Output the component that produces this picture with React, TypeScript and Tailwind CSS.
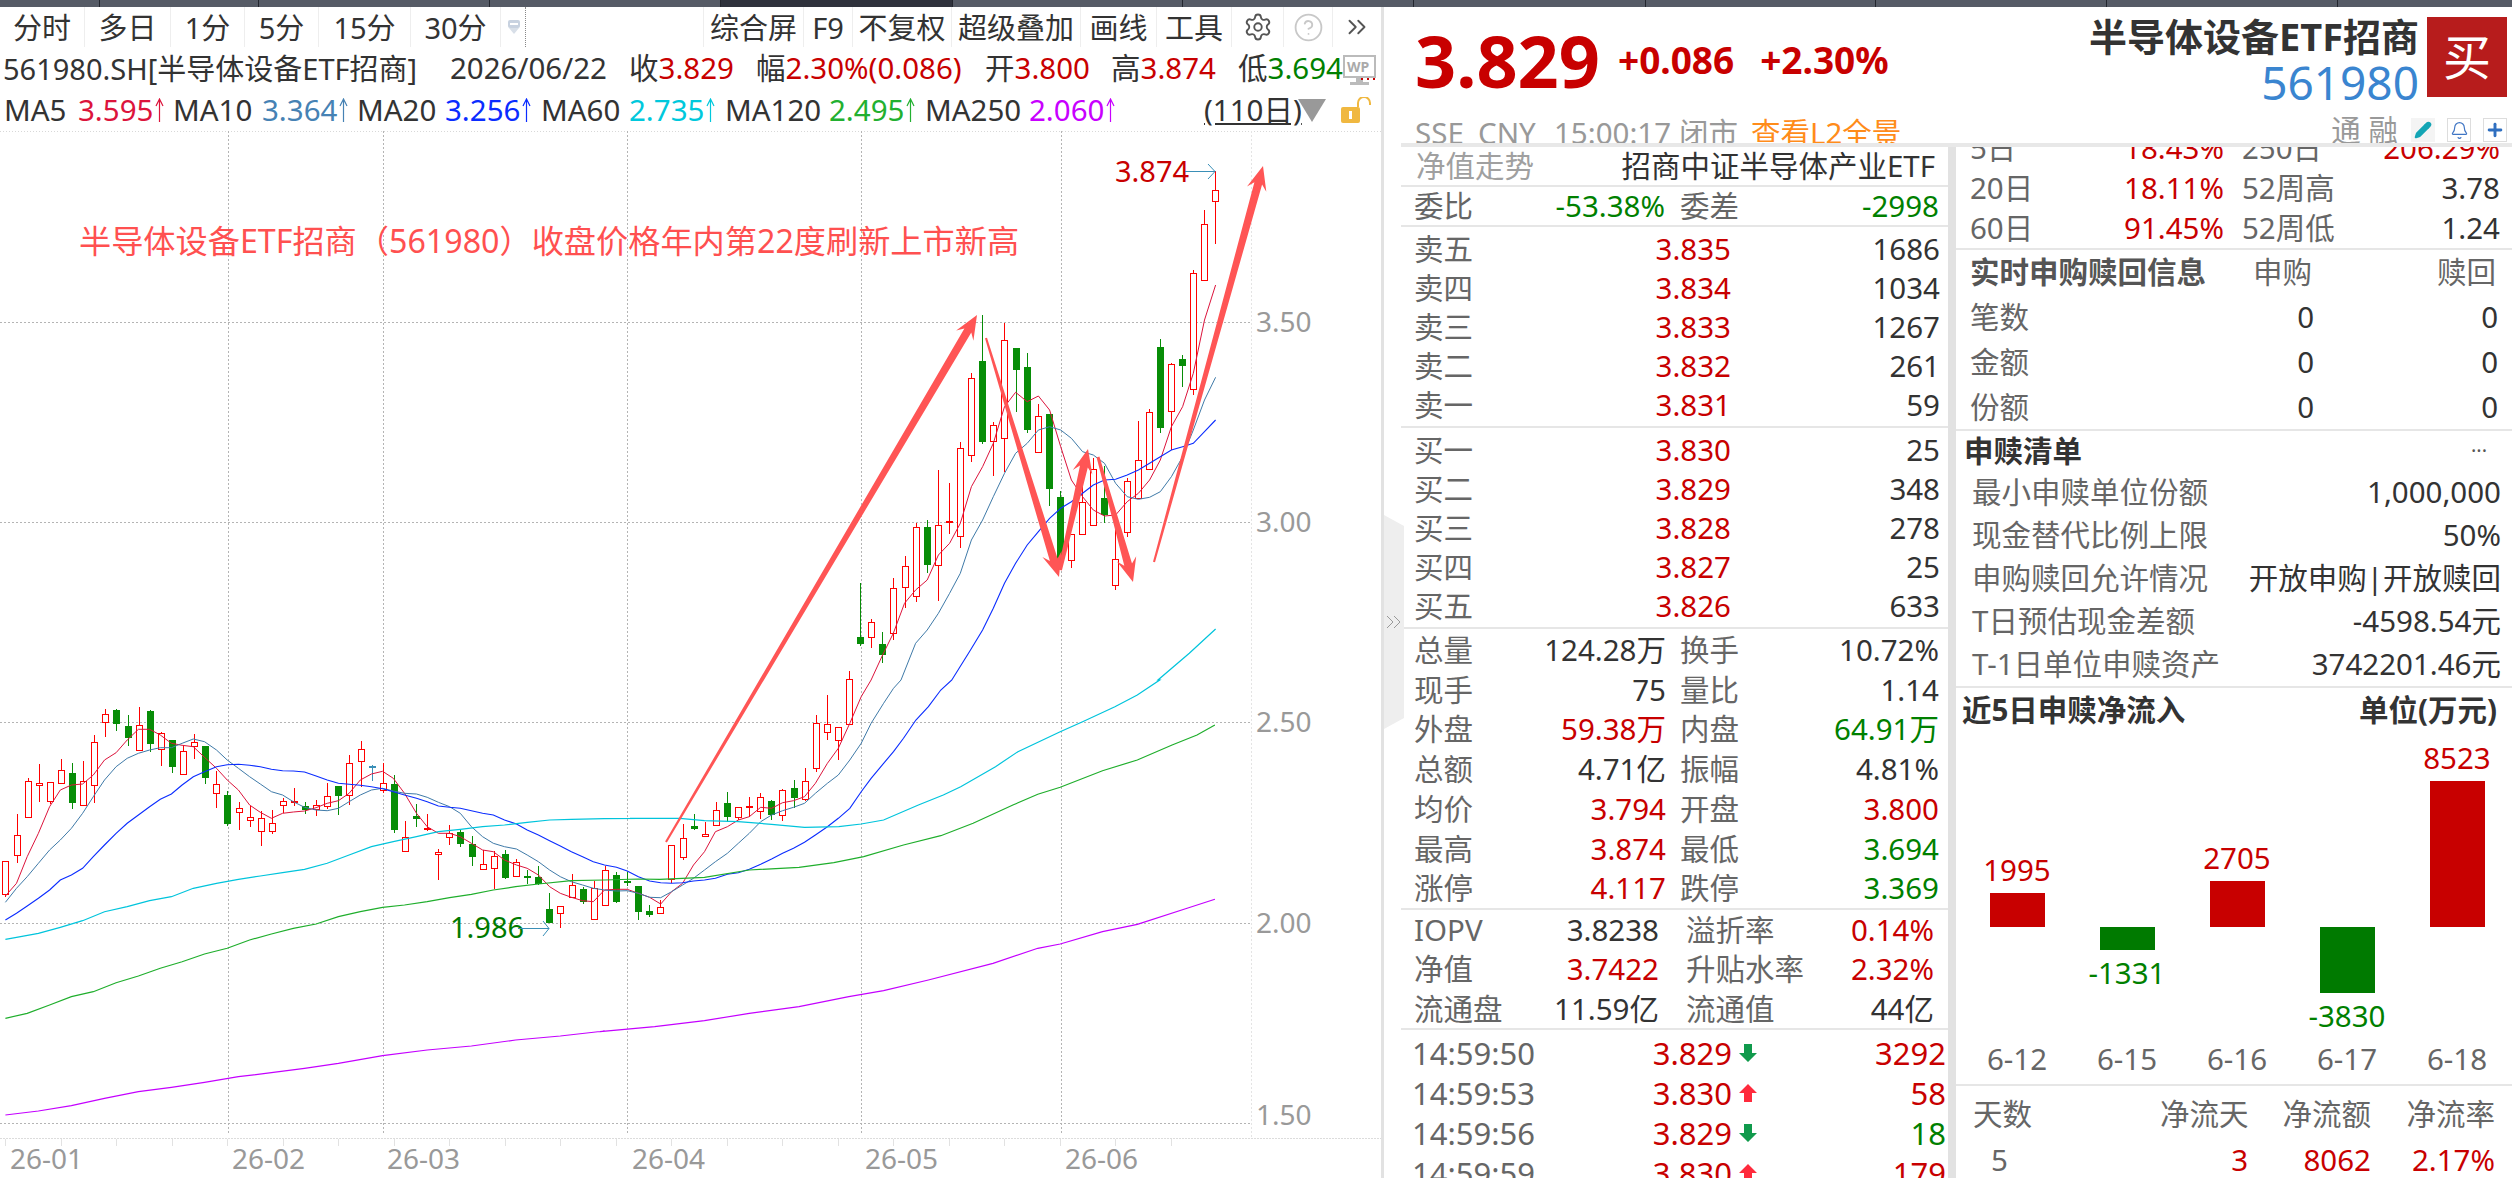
import React from "react";
import { Settings, CircleHelp, ChevronsRight, Pencil, Bell, Plus } from "lucide-react";

// candle: [wickTop, bodyTop, bodyBottom, wickBottom, colour], y values in chart pixels
type Candle = [number, number, number, number, "r" | "g" | "b"];

const low = (v: number) => 680 + v / 3;
const high = (v: number) => 280 + v / 3;

const rawLow: [number, number, number, number, "r" | "g" | "b"][] = [
  [543, 543, 643, 652, "r"], [402, 466, 526, 548, "r"], [295, 304, 412, 412, "r"], [252, 310, 317, 365, "r"], [307, 307, 365, 372, "r"],
  [237, 271, 310, 310, "r"], [250, 280, 368, 386, "g"], [243, 304, 376, 376, "r"], [165, 187, 316, 368, "r"], [87, 103, 127, 170, "r"],
  [88, 90, 131, 152, "g"], [105, 138, 173, 197, "g"], [82, 136, 212, 212, "r"], [90, 93, 191, 215, "g"], [157, 160, 208, 257, "r"],
  [180, 181, 260, 278, "g"], [195, 214, 283, 283, "r"], [162, 187, 200, 236, "r"], [198, 198, 293, 311, "g"], [272, 313, 340, 383, "r"],
  [333, 345, 431, 437, "g"], [367, 385, 398, 449, "r"], [378, 412, 422, 440, "r"], [392, 415, 455, 497, "r"], [390, 430, 455, 462, "r"],
  [355, 364, 376, 400, "r"], [324, 362, 364, 378, "r"], [366, 378, 389, 402, "g"], [360, 374, 386, 407, "r"], [309, 349, 380, 388, "r"],
  [318, 318, 347, 404, "g"], [225, 250, 347, 375, "r"], [183, 208, 244, 320, "r"], [255, 258, 260, 302, "b"], [250, 310, 332, 338, "r"],
  [285, 312, 450, 458, "g"], [423, 472, 514, 514, "r"], [373, 408, 416, 440, "g"], [402, 445, 447, 452, "r"], [507, 516, 521, 600, "r"],
  [435, 458, 471, 495, "r"], [450, 456, 491, 500, "g"], [468, 492, 530, 558, "g"], [510, 553, 568, 568, "r"], [513, 529, 566, 628, "r"],
  [510, 522, 594, 597, "g"], [537, 545, 586, 590, "r"], [570, 589, 592, 612, "g"], [558, 591, 613, 615, "g"], [640, 687, 728, 728, "g"],
  [677, 679, 700, 743, "r"], [582, 616, 652, 652, "r"], [620, 627, 665, 672, "g"], [603, 624, 718, 718, "r"], [557, 571, 676, 676, "r"],
  [577, 585, 665, 668, "g"], [577, 604, 607, 618, "g"], [618, 618, 695, 720, "g"], [675, 694, 705, 712, "g"], [660, 682, 700, 700, "r"],
  [495, 495, 597, 610, "r"], [432, 475, 533, 540, "r"], [403, 438, 446, 450, "g"], [425, 463, 470, 472, "r"], [367, 391, 437, 437, "r"],
  [337, 369, 410, 425, "g"], [380, 380, 410, 420, "r"], [352, 379, 383, 410, "r"], [340, 352, 395, 417, "r"], [360, 364, 405, 420, "g"],
  [328, 331, 407, 422, "r"], [300, 325, 353, 385, "g"], [265, 304, 358, 362, "r"], [105, 130, 266, 275, "r"], [45, 133, 157, 180, "r"],
  [142, 142, 181, 240, "r"],
];

const rawHigh: [number, number, number, number, "r" | "g" | "b"][] = [
  [1173, 1197, 1332, 1335, "r"], [910, 1072, 1092, 1098, "g"], [1018, 1027, 1073, 1103, "r"], [1057, 1093, 1125, 1150, "g"], [895, 925, 1060, 1080, "r"],
  [828, 859, 922, 983, "r"], [730, 742, 950, 965, "r"], [720, 741, 855, 880, "g"], [570, 736, 856, 962, "r"], [608, 723, 725, 762, "r"],
  [487, 505, 770, 803, "r"], [280, 295, 526, 545, "r"], [105, 243, 486, 492, "g"], [427, 436, 485, 587, "r"], [128, 181, 476, 575, "r"],
  [205, 205, 269, 395, "g"], [220, 261, 450, 458, "g"], [372, 409, 518, 518, "r"], [402, 402, 627, 678, "g"], [633, 651, 842, 842, "g"],
  [763, 763, 842, 865, "r"], [610, 666, 761, 761, "r"], [535, 568, 737, 737, "r"], [558, 654, 706, 730, "g"], [745, 838, 916, 930, "r"],
  [595, 604, 758, 770, "r"], [423, 541, 654, 654, "r"], [388, 397, 568, 568, "r"], [178, 201, 443, 458, "g"], [250, 253, 394, 510, "r"],
  [225, 237, 257, 320, "g"],
];

const candles: Candle[] = [
  ...rawLow.map((c): Candle => [low(c[0]), low(c[1]), low(c[2]), low(c[3]), c[4]]),
  ...rawHigh.map((c): Candle => [high(c[0]), high(c[1]), high(c[2]), high(c[3]), c[4]]),
  [270, 273, 389, 395, "r"],
  [210, 224, 280, 281, "r"],
  [171, 190, 201, 244, "r"],
];

const candleX = (i: number) => Math.round(5.4 + 11.1 * i);

// line points were read off three crops, each with its own offset
const fromA = (p: number[]) => pairs(p, (x) => x / 2.24, low);
const fromB = (p: number[]) => pairs(p, (x) => 600 + x / 2.01, low);
const fromC = (p: number[]) => pairs(p, (x) => 600 + x / 2.24, high);

function pairs(p: number[], fx: (n: number) => number, fy: (n: number) => number): string {
  const out: string[] = [];
  for (let i = 0; i < p.length; i += 2) out.push(fx(p[i]).toFixed(1) + "," + fy(p[i + 1]).toFixed(1));
  return out.join(" ");
}

const maLines = [
  {
    color: "#dc143c",
    width: 1,
    points: [
      fromA([12,648,37,610,61,530,86,460,111,380,135,330,160,315,185,312,209,285,234,240,260,218,285,180,310,148,335,148,359,165,384,190,408,196,433,200,458,232,485,265,509,300,534,330,559,375,583,397,608,415,633,400,657,396,682,393,708,383,733,370,758,362,782,340,807,300,832,282,857,274,881,295,906,340,933,400,957,440,982,460,1007,460,1031,470,1056,490,1081,510,1105,515,1130,540,1157,555,1181,565,1206,585,1231,620,1255,640,1280,652,1305,662,1329,665,1354,630,1381,628,1405,628,1430,640,1455,652,1480,672]),
      fromB([144,635,166,610,188,555,210,515,232,455,256,440,278,420,300,410,323,382,345,385,367,368,389,362,411,350,433,310,457,250,479,205,502,130,525,50,545,0]),
      fromC([633,1125,657,1060,682,970,707,930,733,900,758,825,783,790,807,730,832,620,857,560,881,490,906,380,931,337,957,365,982,348,1007,390,1032,500,1056,600,1081,650,1105,690,1130,708,1155,705,1181,665,1206,640,1231,600,1255,540,1280,440,1305,380,1329,280,1354,120,1379,15]),
    ],
  },
  {
    color: "#3f7aa8",
    width: 1,
    points: [
      fromA([12,667,37,625,61,590,86,550,111,510,135,480,160,445,185,400,209,350,234,300,260,260,285,235,310,220,335,210,359,203,384,203,408,190,433,177,458,185,485,210,509,240,534,265,559,290,583,312,608,335,633,345,657,365,682,382,708,390,733,392,758,385,782,365,807,345,832,330,857,325,881,333,906,340,933,342,957,352,982,367,1007,380,1031,400,1056,440,1081,470,1105,490,1130,500,1157,507,1181,525,1206,545,1231,570,1255,590,1280,605,1305,615,1329,625,1354,630,1381,633,1405,632,1430,640,1455,652,1480,653]),
      fromB([144,635,166,615,188,595,210,570,232,545,256,520,278,490,300,460,323,425,345,405,367,392,389,382,411,370,433,340,457,310,479,285,502,240,525,190,545,130,570,70,590,25,605,0]),
      fromC([707,1090,733,1050,758,1000,783,940,807,880,832,780,857,720,881,650,906,580,931,520,957,490,982,450,1007,440,1032,450,1056,475,1081,515,1105,525,1130,550,1155,610,1181,650,1206,658,1231,652,1255,635,1280,590,1305,530,1329,450,1354,360,1379,292]),
    ],
  },
  {
    color: "#0a2cff",
    width: 1.1,
    points: [
      fromA([12,720,37,700,61,678,86,655,111,630,135,600,160,585,185,565,209,530,234,495,260,460,285,430,310,405,335,380,359,358,384,342,408,315,433,290,458,275,485,260,509,254,534,253,559,256,583,260,608,268,633,272,657,273,682,276,708,288,733,300,758,310,782,313,807,316,832,320,857,326,881,335,906,345,933,355,957,365,982,378,1007,382,1031,385,1056,392,1081,400,1105,405,1130,420,1157,432,1181,450,1206,465,1231,482,1255,498,1280,515,1305,530,1329,545,1354,555,1381,562,1405,573,1430,590,1455,603,1480,608]),
      fromB([144,610,166,608,188,603,210,600,232,595,256,583,278,578,300,568,323,553,345,537,367,520,389,505,411,487,433,465,457,440,479,415,502,385,525,335,545,295,570,250,590,215,610,175,635,120,660,80,685,30,707,0]),
      fromC([788,1200,830,1110,857,1050,881,985,906,910,931,850,957,795,982,755,1007,715,1032,685,1056,665,1081,640,1105,615,1130,600,1155,598,1181,585,1206,570,1231,550,1255,530,1280,510,1305,500,1329,490,1354,455,1379,420]),
    ],
  },
  {
    color: "#00c4dc",
    width: 1.2,
    points: [
      fromA([12,778,37,772,86,760,135,742,185,722,234,695,285,680,335,662,384,650,433,625,485,610,534,598,583,588,633,578,682,568,733,550,782,525,832,500,881,485,933,470,982,455,1031,448,1081,440,1130,435,1181,427,1231,420,1280,418,1354,416,1430,415]),
      fromB([60,415,160,415,210,422,278,425,345,433,411,442,480,440,525,432,570,420,640,375,690,345,725,320,795,260,840,215,925,155,970,125,1035,80,1080,45,1125,0]),
      fromC([1250,1200,1320,1120,1379,1047]),
    ],
  },
  {
    color: "#1fae2c",
    width: 1.2,
    points: [
      fromA([12,1015,61,1000,111,975,160,950,209,935,260,908,310,888,359,865,408,845,458,822,509,805,559,780,608,762,657,745,708,732,758,710,807,695,857,682,906,675,957,665,1007,653,1056,643,1105,630,1155,620,1206,612,1280,602,1354,600,1430,597]),
      fromB([120,598,210,592,300,570,400,562,470,548,530,530,610,495,685,467,750,430,830,375,880,343,925,322,1010,272,1080,240,1150,195,1200,165,1236,135]),
    ],
  },
  {
    color: "#c400ff",
    width: 1.2,
    points: [
      fromA([12,1305,86,1293,160,1277,234,1255,310,1235,384,1222,458,1207,534,1190,608,1178,682,1165,758,1150,857,1127,957,1110,1056,1098,1155,1080,1255,1068,1354,1053]),
      fromB([0,1055,110,1040,210,1022,300,1000,400,980,500,950,570,932,660,900,790,850,880,805,925,792,1010,755,1080,733,1180,685,1236,658]),
    ],
  },
];

// tapered drawn-on arrow, thin at the tail and wide near the head
function arrowPoints(x1: number, y1: number, x2: number, y2: number, w1: number, w2: number, headLen: number, headW: number): string {
  const len = Math.hypot(x2 - x1, y2 - y1);
  const ux = (x2 - x1) / len;
  const uy = (y2 - y1) / len;
  const nx = -uy;
  const ny = ux;
  const bx = x2 - ux * headLen * 0.75;
  const by = y2 - uy * headLen * 0.75;
  const hx = x2 - ux * headLen;
  const hy = y2 - uy * headLen;
  const p = [
    [x1 + (nx * w1) / 2, y1 + (ny * w1) / 2],
    [bx + (nx * w2) / 2, by + (ny * w2) / 2],
    [hx + (nx * headW) / 2, hy + (ny * headW) / 2],
    [x2, y2],
    [hx - (nx * headW) / 2, hy - (ny * headW) / 2],
    [bx - (nx * w2) / 2, by - (ny * w2) / 2],
    [x1 - (nx * w1) / 2, y1 - (ny * w1) / 2],
  ];
  return p.map((q) => q[0].toFixed(1) + "," + q[1].toFixed(1)).join(" ");
}

const drawnArrows = [
  arrowPoints(666, 842, 977, 315, 2, 8, 24, 20),
  arrowPoints(986, 338, 1059, 577, 2, 8, 24, 20),
  arrowPoints(1060, 570, 1088, 449, 4, 8, 24, 20),
  arrowPoints(1098, 457, 1133, 582, 3, 8, 24, 20),
  arrowPoints(1154, 562, 1263, 166, 2, 8, 24, 20),
];

const priceGrid = [
  { y: 322, label: "3.50", textY: 322 },
  { y: 522, label: "3.00", textY: 522 },
  { y: 722, label: "2.50", textY: 722 },
  { y: 923, label: "2.00", textY: 923 },
  { y: 1123, label: "1.50", textY: 1115 },
];
const monthLines = [228, 383, 627, 861, 1061];
const monthLabels = [
  { x: 10, t: "26-01" },
  { x: 232, t: "26-02" },
  { x: 387, t: "26-03" },
  { x: 632, t: "26-04" },
  { x: 865, t: "26-05" },
  { x: 1065, t: "26-06" },
];

function KChart() {
  return (
    <svg viewBox="0 131 1381 1047" className="block w-[1381px] h-[1047px]">
      <line x1="0" y1="131.5" x2="1381" y2="131.5" stroke="#d8d8d8" strokeDasharray="1 2" />
      {priceGrid.map((g) => (
        <line key={g.y} x1="0" y1={g.y + 0.5} x2="1252" y2={g.y + 0.5} stroke="#b4b4b4" strokeDasharray="2 2" />
      ))}
      {monthLines.map((x) => (
        <line key={x} x1={x + 0.5} y1="131" x2={x + 0.5} y2="1134" stroke="#b4b4b4" strokeDasharray="2 2" />
      ))}
      <line x1="1251.5" y1="131" x2="1251.5" y2="1138" stroke="#e4e4e4" strokeDasharray="2 2" />
      <line x1="0" y1="1138.5" x2="1381" y2="1138.5" stroke="#dcdcdc" strokeDasharray="2 1" />
      {candles.map((_, i) =>
        i % 5 === 0 ? <line key={i} x1={candleX(i) + 0.5} y1="1139" x2={candleX(i) + 0.5} y2="1146" stroke="#e2e2e2" /> : null
      )}

      <g shapeRendering="crispEdges">
        {candles.map((c, i) => {
          const x = candleX(i);
          const col = c[4] === "r" ? "#ff0000" : c[4] === "g" ? "#078d07" : "#3a8fb7";
          return (
            <g key={i}>
              <line x1={x + 0.5} y1={c[0]} x2={x + 0.5} y2={c[3]} stroke={col} />
              {c[4] === "r" ? (
                <rect x={x - 2.5} y={Math.round(c[1]) + 0.5} width="6" height={Math.max(1, Math.round(c[2] - c[1]))} fill="#fff" stroke={col} />
              ) : (
                <rect x={x - 3} y={c[1]} width="7" height={Math.max(2, c[2] - c[1])} fill={col} />
              )}
            </g>
          );
        })}
      </g>

      {maLines.map((m) => (
        <polyline key={m.color} points={m.points.join(" ")} fill="none" stroke={m.color} strokeWidth={m.width} />
      ))}

      {drawnArrows.map((p, i) => (
        <polygon key={i} points={p} fill="#ff5555" />
      ))}

      <text x="79" y="253" fontSize="32.2" fill="#ff5050">半导体设备ETF招商（561980）收盘价格年内第22度刷新上市新高</text>

      <text x="1115" y="182" fontSize="29" fill="#c80000">3.874</text>
      <path d="M1185 171.5H1215M1208 164l7 7.5-7 7.5" fill="none" stroke="#3a8fb7" />
      <text x="450" y="938" fontSize="29" fill="#007a00">1.986</text>
      <path d="M518 928.5H549M543 921l6 7.5-6 7.5" fill="none" stroke="#3a8fb7" />

      {priceGrid.map((g) => (
        <text key={g.label} x="1256" y={g.textY + 10} fontSize="28" fill="#999">{g.label}</text>
      ))}
      {monthLabels.map((m) => (
        <text key={m.t} x={m.x} y="1169" fontSize="28" fill="#999">{m.t}</text>
      ))}
    </svg>
  );
}

const leftTabs = [
  { t: "分时", w: "w-[85px]" },
  { t: "多日", w: "w-[86px]" },
  { t: "1分", w: "w-[74px]" },
  { t: "5分", w: "w-[74px]" },
  { t: "15分", w: "w-[92px]" },
  { t: "30分", w: "w-[90px]" },
];
const rightTabs = [
  { t: "综合屏", w: "w-[100px]" },
  { t: "F9", w: "w-[49px]" },
  { t: "不复权", w: "w-[99px]" },
  { t: "超级叠加", w: "w-[129px]" },
  { t: "画线", w: "w-[76px]" },
  { t: "工具", w: "w-[75px]" },
];

function Toolbar() {
  return (
    <div className="flex h-[40px] items-center text-[29px] text-[#333] whitespace-nowrap">
      {leftTabs.map((t) => (
        <div key={t.t} className={`${t.w} h-full flex items-center justify-center border-r border-[#eeeeee]`}>{t.t}</div>
      ))}
      <div className="w-[25px] h-full flex items-center justify-end pr-[5px] border-r border-dotted border-[#888]">
        <svg width="12" height="14" viewBox="0 0 12 14">
          <rect x="0" y="0" width="12" height="8" rx="2" fill="#c8d2e0" />
          <rect x="2" y="3" width="8" height="2" fill="#fff" />
          <path d="M1 8h10l-5 6z" fill="#d8dfe8" />
        </svg>
      </div>
      <div className="w-[178px] h-full border-r border-[#eeeeee]" />
      {rightTabs.map((t) => (
        <div key={t.t} className={`${t.w} h-full flex items-center justify-center border-r border-[#eeeeee]`}>{t.t}</div>
      ))}
      <div className="w-[52px] h-full flex items-center justify-center border-r border-[#eeeeee]">
        <Settings size={30} strokeWidth={1.5} color="#555" />
      </div>
      <div className="w-[49px] h-full flex items-center justify-center border-r border-[#eeeeee]">
        <CircleHelp size={31} strokeWidth={1.4} color="#c8c8c8" />
      </div>
      <div className="flex-1 h-full flex items-center justify-center">
        <ChevronsRight size={30} strokeWidth={1.5} color="#555" />
      </div>
    </div>
  );
}

function QuoteRow() {
  return (
    <div className="relative flex h-[42px] items-center pl-[3px] text-[#333] whitespace-nowrap">
      <div className="w-[447px] text-[29px]">561980.SH[半导体设备ETF招商]</div>
      <div className="w-[179px]">2026/06/22</div>
      <div className="w-[127px]">收<span className="text-[#c80000]">3.829</span></div>
      <div className="w-[229px]">幅<span className="text-[#c80000]">2.30%(0.086)</span></div>
      <div className="w-[126px]">开<span className="text-[#c80000]">3.800</span></div>
      <div className="w-[127px]">高<span className="text-[#c80000]">3.874</span></div>
      <div className="w-[105px]">低<span className="text-[#008000]">3.694</span></div>
      <svg width="34" height="32" viewBox="0 0 34 32" className="absolute left-[1343px] top-[8px]">
        <rect x="1" y="1" width="31" height="21" fill="#fff" stroke="#bbb" strokeWidth="2" />
        <rect x="13" y="22" width="7" height="5" fill="#bbb" />
        <rect x="7" y="27" width="19" height="3" fill="#bbb" />
        <text x="4" y="17" fontSize="14" fontWeight="700" fill="#aaa">WP</text>
        <path d="M18 24h2M24 24h2M30 24h2" stroke="#c80000" strokeWidth="2" />
      </svg>
    </div>
  );
}

const maLegend = [
  { n: "MA5", v: "3.595", c: "text-[#dc143c]", w: "w-[169px]", nw: "w-[74px]" },
  { n: "MA10", v: "3.364", c: "text-[#4682b4]", w: "w-[184px]", nw: "w-[89px]" },
  { n: "MA20", v: "3.256", c: "text-[#0a2cff]", w: "w-[184px]", nw: "w-[88px]" },
  { n: "MA60", v: "2.735", c: "text-[#00c8dc]", w: "w-[184px]", nw: "w-[88px]" },
  { n: "MA120", v: "2.495", c: "text-[#22b030]", w: "w-[200px]", nw: "w-[104px]" },
  { n: "MA250", v: "2.060", c: "text-[#c800ff]", w: "w-[279px]", nw: "w-[104px]" },
];

function UpMark() {
  return (
    <svg width="9" height="24" viewBox="0 0 9 24" className="ml-[2px]">
      <path d="M4.5 24V1M1 8l3.5-7 3.5 7" fill="none" stroke="currentColor" strokeWidth="1.2" />
    </svg>
  );
}

function MaRow() {
  return (
    <div className="flex h-[42px] items-center pl-[4px] text-[#333] whitespace-nowrap">
      {maLegend.map((m) => (
        <div key={m.n} className={`${m.w} flex items-center`}>
          <span className={`${m.nw} shrink-0`}>{m.n}</span>
          <span className={`${m.c} flex items-center`}>{m.v}<UpMark /></span>
        </div>
      ))}
      <div className="w-[94px] underline">(110日)</div>
      <div className="w-0 h-0 border-l-[14px] border-r-[14px] border-t-[23px] border-l-transparent border-r-transparent border-t-[#999]" />
      <svg width="32" height="27" viewBox="0 0 32 27" className="ml-[15px]">
        <rect x="0" y="10" width="19" height="16" rx="2" fill="#f0b840" />
        <rect x="8" y="14" width="3" height="8" fill="#fff" />
        <path d="M17 10V6a6 6 0 0 1 12 0v2" fill="none" stroke="#f0b840" strokeWidth="2" />
      </svg>
    </div>
  );
}

const asks = [
  ["卖五", "3.835", "1686"],
  ["卖四", "3.834", "1034"],
  ["卖三", "3.833", "1267"],
  ["卖二", "3.832", "261"],
  ["卖一", "3.831", "59"],
];
const bids = [
  ["买一", "3.830", "25"],
  ["买二", "3.829", "348"],
  ["买三", "3.828", "278"],
  ["买四", "3.827", "25"],
  ["买五", "3.826", "633"],
];

const R = "text-[#c80000]";
const G = "text-[#008000]";
const D = "text-[#333]";

const statsA = [
  ["总量", "124.28万", D, "换手", "10.72%", D],
  ["现手", "75", D, "量比", "1.14", D],
  ["外盘", "59.38万", R, "内盘", "64.91万", G],
  ["总额", "4.71亿", D, "振幅", "4.81%", D],
  ["均价", "3.794", R, "开盘", "3.800", R],
  ["最高", "3.874", R, "最低", "3.694", G],
  ["涨停", "4.117", R, "跌停", "3.369", G],
];
const statsB = [
  ["IOPV", "3.8238", D, "溢折率", "0.14%", R],
  ["净值", "3.7422", R, "升贴水率", "2.32%", R],
  ["流通盘", "11.59亿", D, "流通值", "44亿", D],
];
const ticks = [
  ["14:59:50", "3.829", false, "3292", R],
  ["14:59:53", "3.830", true, "58", R],
  ["14:59:56", "3.829", false, "18", G],
  ["14:59:59", "3.830", true, "179", R],
] as const;

function BookRows({ rows }: { rows: string[][] }) {
  return (
    <div className="py-[2px]">
      {rows.map((r) => (
        <div key={r[0]} className="h-[39px] pl-[13px] grid grid-cols-[100px_217px_209px] items-center">
          <div className="text-[#666]">{r[0]}</div>
          <div className="text-right text-[#c80000]">{r[1]}</div>
          <div className="text-right text-[#333]">{r[2]}</div>
        </div>
      ))}
    </div>
  );
}

function TickArrow({ up }: { up: boolean }) {
  return (
    <svg width="18" height="18" viewBox="0 0 18 18">
      {up ? <path d="M9 0l9 9h-5v9H5V9H0z" fill="#ff2a3c" /> : <path d="M9 18L0 9h5V0h8v9h5z" fill="#109a4c" />}
    </svg>
  );
}

function MarketColumn() {
  return (
    <div className="w-[547px] overflow-hidden">
      <div className="h-[40px] flex items-center justify-between pl-[15px] pr-[13px] border-b-2 border-[#e6e6e6]">
        <div className="text-[#a0a0a0]">净值走势</div>
        <div className="text-[#333]">招商中证半导体产业ETF</div>
      </div>
      <div className="h-[40px] pl-[13px] grid grid-cols-[100px_151px_115px_159px] items-center border-b-2 border-[#e6e6e6]">
        <div className="text-[#666]">委比</div>
        <div className={`text-right ${G}`}>-53.38%</div>
        <div className="pl-[15px] text-[#666]">委差</div>
        <div className={`text-right ${G}`}>-2998</div>
      </div>
      <div className="border-b-2 border-[#e6e6e6]"><BookRows rows={asks} /></div>
      <div className="border-b-2 border-[#e6e6e6]"><BookRows rows={bids} /></div>
      <div className="border-b-2 border-[#e6e6e6] pt-[1px]">
        {statsA.map((r) => (
          <div key={r[0]} className="h-[39.7px] pl-[13px] grid grid-cols-[100px_152px_114px_159px] items-center">
            <div className="text-[#666]">{r[0]}</div>
            <div className={`text-right ${r[2]}`}>{r[1]}</div>
            <div className="pl-[14px] text-[#666]">{r[3]}</div>
            <div className={`text-right ${r[5]}`}>{r[4]}</div>
          </div>
        ))}
      </div>
      <div className="border-b-2 border-[#e6e6e6]">
        {statsB.map((r) => (
          <div key={r[0]} className="h-[39.5px] pl-[13px] grid grid-cols-[100px_145px_130px_145px] items-center">
            <div className="text-[#666] whitespace-nowrap">{r[0]}</div>
            <div className={`text-right ${r[2]}`}>{r[1]}</div>
            <div className="pl-[27px] text-[#666] whitespace-nowrap">{r[3]}</div>
            <div className={`text-right ${r[5]}`}>{r[4]}</div>
          </div>
        ))}
      </div>
      <div className="pt-[3px] text-[31px]">
        {ticks.map((r) => (
          <div key={r[0]} className="h-[40px] pl-[11px] grid grid-cols-[105px_215px_28px_186px] items-center">
            <div className="text-[#666] whitespace-nowrap">{r[0]}</div>
            <div className="text-right text-[#c80000]">{r[1]}</div>
            <div className="pl-[7px] flex items-center"><TickArrow up={r[2]} /></div>
            <div className={`text-right ${r[4]}`}>{r[3]}</div>
          </div>
        ))}
      </div>
    </div>
  );
}

const returns = [
  ["5日", "18.43%", "250日", "206.29%"],
  ["20日", "18.11%", "52周高", "3.78"],
  ["60日", "91.45%", "52周低", "1.24"],
];
const subscribe = [
  ["笔数", "0", "0"],
  ["金额", "0", "0"],
  ["份额", "0", "0"],
];
const basket = [
  ["最小申赎单位份额", "1,000,000"],
  ["现金替代比例上限", "50%"],
  ["申购赎回允许情况", "开放申购|开放赎回"],
  ["T日预估现金差额", "-4598.54元"],
  ["T-1日单位申赎资产", "3742201.46元"],
];
const flows = [
  { d: "6-12", v: 1995 },
  { d: "6-15", v: -1331 },
  { d: "6-16", v: 2705 },
  { d: "6-17", v: -3830 },
  { d: "6-18", v: 8523 },
];
const flowScale = 146 / 8523;

function FlowChart() {
  return (
    <div className="grid grid-cols-[repeat(5,110px)] ml-[6px]">
      {flows.map((f) => {
        const h = Math.round(Math.abs(f.v) * flowScale);
        return (
          <div key={f.d} className="flex flex-col items-center">
            <div className="h-[195px] flex flex-col justify-end items-center">
              {f.v > 0 && (
                <>
                  <div className={`leading-[30px] mb-[8px] ${R}`}>{f.v}</div>
                  <div className="w-[55px] bg-[#c80000]" style={{ height: h }} />
                </>
              )}
            </div>
            <div className="h-[112px] flex flex-col items-center">
              {f.v < 0 && (
                <>
                  <div className="w-[55px] bg-[#007a00]" style={{ height: h }} />
                  <div className={`leading-[30px] mt-[8px] ${G}`}>{f.v}</div>
                </>
              )}
            </div>
            <div className="h-[45px] pb-[5px] flex items-center text-[#666]">{f.d}</div>
          </div>
        );
      })}
    </div>
  );
}

function EtfColumn() {
  return (
    <div className="flex-1 overflow-hidden">
      <div className="-mt-[19px] border-b-2 border-[#e6e6e6]">
        {returns.map((r) => (
          <div key={r[0]} className="h-[40px] pl-[14px] grid grid-cols-[100px_154px_118px_158px] items-center">
            <div className="text-[#666]">{r[0]}</div>
            <div className={`text-right ${R}`}>{r[1]}</div>
            <div className="pl-[18px] text-[#666] whitespace-nowrap">{r[2]}</div>
            <div className={`text-right ${r[3] === "206.29%" ? R : D}`}>{r[3]}</div>
          </div>
        ))}
      </div>
      <div className="border-b-2 border-[#e6e6e6]">
        <div className="h-[44px] pl-[14px] grid grid-cols-[271px_71px_184px] items-center">
          <div className="font-bold text-[#555] whitespace-nowrap">实时申购赎回信息</div>
          <div className="text-right text-[#666]">申购</div>
          <div className="text-right text-[#666]">赎回</div>
        </div>
        {subscribe.map((r) => (
          <div key={r[0]} className="h-[45px] pl-[14px] grid grid-cols-[100px_244px_184px] items-center">
            <div className="text-[#666]">{r[0]}</div>
            <div className={`text-right ${D}`}>{r[1]}</div>
            <div className={`text-right ${D}`}>{r[2]}</div>
          </div>
        ))}
      </div>
      <div className="border-b-2 border-[#e6e6e6]">
        <div className="h-[39.5px] pl-[8px] pr-[25px] flex items-center justify-between">
          <div className="font-bold text-[#333]">申赎清单</div>
          <div className="text-[#555] text-[20px]">···</div>
        </div>
        {basket.map((r) => (
          <div key={r[0]} className="h-[43px] pl-[16px] pr-[11px] flex items-center justify-between whitespace-nowrap">
            <div className="text-[#666]">{r[0]}</div>
            <div className={D}>{r[1]}</div>
          </div>
        ))}
      </div>
      <div className="h-[44px] pl-[6px] pr-[15px] flex items-center justify-between font-bold text-[#333]">
        <div>近5日申赎净流入</div>
        <div>单位(万元)</div>
      </div>
      <FlowChart />
      <div className="border-t-2 border-[#e6e6e6]">
        <div className="h-[56px] grid grid-cols-[187px_88px_123px_124px] items-center text-[#666] pl-[17px] whitespace-nowrap">
          <div>天数</div>
          <div className="text-right">净流天</div>
          <div className="text-right">净流额</div>
          <div className="text-right">净流率</div>
        </div>
        <div className="h-[36px] grid grid-cols-[187px_88px_123px_124px] items-center pl-[17px]">
          <div className="pl-[18px] text-[#666]">5</div>
          <div className={`text-right ${R}`}>3</div>
          <div className={`text-right ${R}`}>8062</div>
          <div className={`text-right ${R}`}>2.17%</div>
        </div>
      </div>
    </div>
  );
}

function PanelHeader() {
  return (
    <div className="h-[136px] flex justify-between overflow-hidden">
      <div className="pl-[14px]">
        <div className="h-[105px] flex items-center text-[#c80000] font-bold">
          <span className="text-[72px]">3.829</span>
          <span className="text-[37px] ml-[18px]">+0.086</span>
          <span className="text-[37px] ml-[26px]">+2.30%</span>
        </div>
        <div className="h-[31px] overflow-hidden leading-[42px] text-[#999] whitespace-nowrap flex">
          <span className="w-[63px]">SSE</span>
          <span className="w-[76px]">CNY</span>
          <span className="w-[125px]">15:00:17</span>
          <span className="w-[72px]">闭市</span>
          <span className="text-[#ff8c1a]">查看L2全景</span>
        </div>
      </div>
      <div className="pt-[10px] pr-[5px] flex flex-col items-end">
        <div className="flex h-[80px]">
          <div className="flex flex-col items-end mr-[8px]">
            <div className="text-[38px] font-bold leading-[38px] text-[#333] whitespace-nowrap">半导体设备ETF招商</div>
            <div className="text-[46px] leading-[54px] text-[#3a85d0]">561980</div>
          </div>
          <div className="w-[80px] h-[80px] bg-[#b71c1c] flex items-center justify-center text-[48px] text-white">买</div>
        </div>
        <div className="pt-[21px] flex items-center">
          <span className="text-[#999] leading-[24px] mr-[13px]">通 融</span>
          <span className="w-[24px] h-[24px] bg-[#f4f4f4] flex items-center justify-center"><Pencil size={18} fill="#14a5b5" color="#14a5b5" /></span>
          <span className="w-[24px] h-[24px] ml-[12px] border border-[#ddd] flex items-center justify-center"><Bell size={19} strokeWidth={1.5} color="#3f75c4" /></span>
          <span className="w-[24px] h-[24px] ml-[12px] border border-[#ddd] flex items-center justify-center"><Plus size={20} strokeWidth={3.5} color="#2f6fc0" /></span>
        </div>
      </div>
    </div>
  );
}

const topSegments = [
  { w: "w-[100px]", dark: false },
  { w: "w-[159px]", dark: false },
  { w: "w-[231px]", dark: false },
  { w: "w-[231px]", dark: false },
  { w: "w-[232px]", dark: true },
  { w: "w-[230px]", dark: false },
  { w: "w-[231px]", dark: false },
  { w: "w-[232px]", dark: false },
  { w: "w-[230px]", dark: false },
  { w: "w-[231px]", dark: false },
  { w: "w-[231px]", dark: false },
];

export default function App(): React.ReactElement {
  return (
    <div className="w-[2512px] h-[1178px] overflow-hidden bg-white text-[29.5px] leading-none [font-family:'Noto_Sans','Noto_Sans_CJK_SC',sans-serif]">
      <div className="flex h-[7px] bg-[#565b66]">
        {topSegments.map((s, i) => (
          <div key={i} className={`${s.w} h-full border-r border-[#23262e] ${s.dark ? "bg-[#2f323c]" : ""}`} />
        ))}
      </div>
      <div className="flex h-[1171px]">
        <div className="w-[1381px] relative">
          <Toolbar />
          <QuoteRow />
          <MaRow />
          <KChart />
        </div>
        <div className="w-[4px] bg-[#e2e2e2]" />
        <div className="w-[20px] relative">
          <svg width="20" height="214" viewBox="0 0 20 214" className="absolute left-0 top-[508px]">
            <polygon points="0,0 20,11 20,203 0,214" fill="#eeeeee" />
            <path d="M3 101l6 6-6 6M10 101l6 6-6 6" fill="none" stroke="#999" strokeWidth="1" />
          </svg>
        </div>
        <div className="flex-1 flex flex-col">
          <PanelHeader />
          <div className="h-[4px] bg-[#e8e8e8]" />
          <div className="flex-1 flex overflow-hidden">
            <MarketColumn />
            <div className="w-[8px] bg-[#e2e2e2]" />
            <EtfColumn />
          </div>
        </div>
      </div>
    </div>
  );
}
